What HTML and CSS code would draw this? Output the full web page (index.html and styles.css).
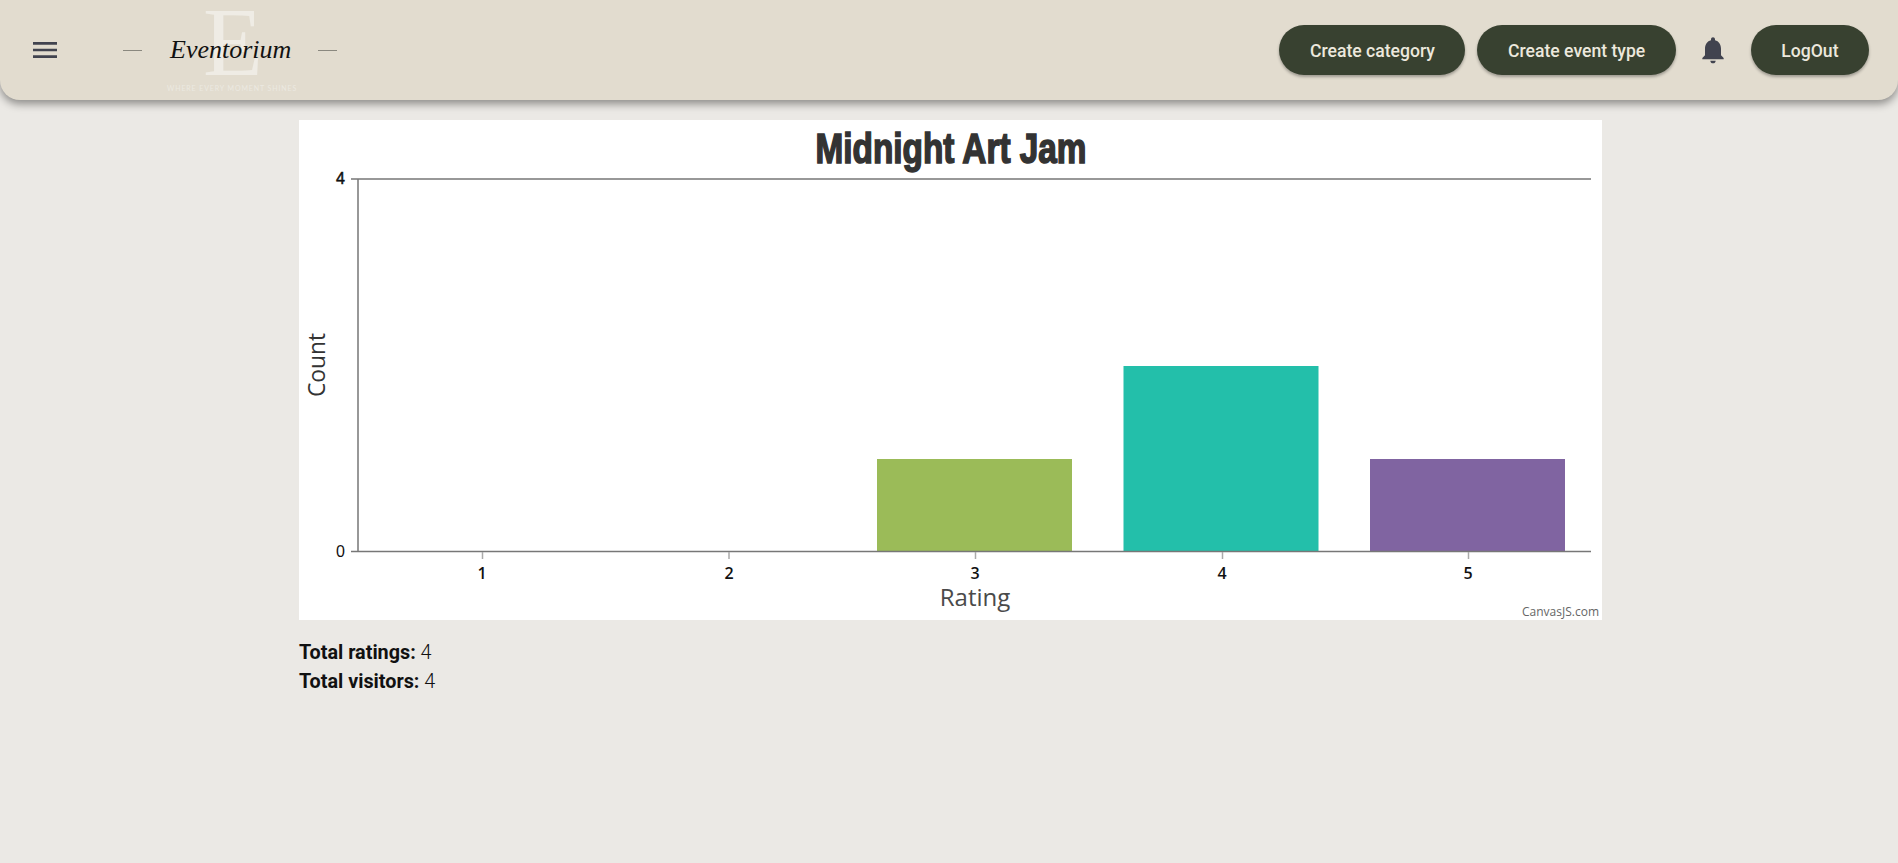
FILE: index.html
```html
<!DOCTYPE html>
<html lang="en">
<head>
  <meta charset="UTF-8" />
  <title>Eventorium</title>
  <link rel="stylesheet" href="styles.css">
</head>
<body>
  <header id="topbar">
    <button class="icon-btn menu-btn" aria-label="Menu">
      <svg viewBox="0 0 24 24" width="32" height="32"><path d="M3 18h18v-2H3v2zm0-5h18v-2H3v2zm0-7v2h18V6H3z"/></svg>
    </button>
    <div class="logo">
      <span class="logo-letter">E</span>
      <span class="logo-dash"></span>
      <span class="logo-name">Eventorium</span>
      <span class="logo-dash"></span>
      <span class="logo-tag">WHERE EVERY MOMENT SHINES</span>
    </div>
    <nav class="actions">
      <button class="pill">Create category</button>
      <button class="pill">Create event type</button>
      <button class="icon-btn bell-btn" aria-label="Notifications">
        <svg viewBox="0 0 24 24" width="32" height="32"><path d="M12 22c1.1 0 2-.9 2-2h-4c0 1.1.89 2 2 2zm6-6v-5c0-3.07-1.64-5.64-4.5-6.32V4c0-.83-.67-1.5-1.5-1.5s-1.5.67-1.5 1.5v.68C7.63 5.36 6 7.92 6 11v5l-2 2v1h16v-1l-2-2z"/></svg>
      </button>
      <button class="pill">LogOut</button>
    </nav>
  </header>

  <main id="content">
    <svg class="chart" viewBox="0 0 1303 500" width="1303" height="500">
      <text class="chart-title" x="652" y="43" textLength="271" lengthAdjust="spacingAndGlyphs" text-anchor="middle">Midnight Art Jam</text>

      <!-- bars -->
      <rect x="578" y="339" width="195" height="92" fill="#9bbb58"/>
      <rect x="824.5" y="246" width="195" height="185" fill="#23bfaa"/>
      <rect x="1071" y="339" width="195" height="92" fill="#8064a1"/>

      <!-- axes -->
      <path class="axis" d="M52 59H1292M52 431.5H1292M59 59V431.5"/>
      <path class="tick" d="M183.5 432V439M430 432V439M676.5 432V439M923.5 432V439M1169.5 432V439"/>

      <text class="y-tick y-tick-top" x="46" y="64" text-anchor="end">4</text>
      <text class="y-tick" x="46" y="437" text-anchor="end">0</text>

      <text class="x-tick" x="183" y="459" text-anchor="middle">1</text>
      <text class="x-tick" x="430" y="459" text-anchor="middle">2</text>
      <text class="x-tick" x="676" y="459" text-anchor="middle">3</text>
      <text class="x-tick" x="923" y="459" text-anchor="middle">4</text>
      <text class="x-tick" x="1169" y="459" text-anchor="middle">5</text>

      <text class="axis-title" x="676" y="486" text-anchor="middle">Rating</text>
      <text class="axis-title count-title" transform="translate(26 245) rotate(-90)" text-anchor="middle">Count</text>

      <text class="credit" x="1300" y="496" text-anchor="end">CanvasJS.com</text>
    </svg>

    <div class="stats">
      <div><strong>Total ratings:</strong> 4</div>
      <div><strong>Total visitors:</strong> 4</div>
    </div>
  </main>
</body>
</html>
```

FILE: styles.css
```css
html, body {
  margin: 0;
  padding: 0;
  height: 100%;
  font-family: Roboto, sans-serif;
  background: #ebe9e5;
  color: #111;
  overflow: hidden;
}

#topbar {
  display: flex;
  align-items: center;
  height: 100px;
  padding: 0 29px 0 29px;
  box-sizing: border-box;
  background: #e2dccf;
  border-radius: 0 0 20px 20px;
  box-shadow: 0 4px 8px rgba(0, 0, 0, 0.4);
}

.icon-btn {
  display: flex;
  align-items: center;
  justify-content: center;
  padding: 0;
  border: none;
  background: transparent;
  cursor: pointer;
}

.icon-btn svg {
  fill: #41434f;
}

.logo {
  position: relative;
  display: flex;
  align-items: center;
  gap: 28px;
  margin-left: 62px;
}

.logo-dash {
  width: 19px;
  height: 1px;
  background: #8a887f;
}

.logo-name {
  position: relative;
  width: 120px;
  font-family: "Liberation Serif", serif;
  font-style: italic;
  font-size: 26px;
  line-height: 36px;
  white-space: nowrap;
  color: #111;
}

.logo-letter {
  position: absolute;
  left: 80px;
  top: -29px;
  font-family: "Liberation Serif", serif;
  font-size: 98px;
  line-height: 78px;
  color: #efece5;
}

.logo-tag {
  position: absolute;
  left: 44px;
  top: 52px;
  font-family: Lato, sans-serif;
  font-size: 7px;
  letter-spacing: 0.9px;
  white-space: nowrap;
  color: #ece9e1;
}

.actions {
  display: flex;
  align-items: center;
  gap: 12px;
  margin-left: auto;
}

.pill {
  height: 50px;
  padding: 1px 30.5px 0;
  border: none;
  border-radius: 25px;
  background: #384130;
  color: #ece8dd;
  font-family: Roboto, sans-serif;
  font-size: 17.6px;
  font-weight: 500;
  cursor: pointer;
  box-shadow: 0 2px 3px rgba(0, 0, 0, 0.3);
}

.bell-btn {
  margin: 0 9.5px;
}

#content {
  padding: 20px 0 0 299px;
}

.chart {
  display: block;
  background: #fff;
}

.chart-title {
  font-family: "Liberation Sans", sans-serif;
  font-weight: 700;
  font-size: 42px;
  fill: #333;
  stroke: #333;
  stroke-width: 1.6;
}

.axis {
  fill: none;
  stroke: #777;
  stroke-width: 1.5;
}

.tick {
  fill: none;
  stroke: #aaa;
  stroke-width: 1.5;
}

.y-tick {
  font-family: "Liberation Sans", sans-serif;
  font-size: 16px;
  fill: #111;
}

.y-tick-top {
  stroke: #111;
  stroke-width: 0.5;
}

.x-tick {
  font-family: "Open Sans", sans-serif;
  font-size: 16px;
  font-weight: 600;
  fill: #111;
}

.axis-title {
  font-family: "Open Sans", sans-serif;
  font-size: 24px;
  fill: #4a4a4a;
}

.count-title {
  font-size: 22.8px;
  fill: #333;
}

.credit {
  font-family: "Open Sans", sans-serif;
  font-size: 12px;
  fill: #666;
}

.stats {
  margin-top: 18px;
  font-size: 19.8px;
  line-height: 29px;
  font-weight: 300;
}

.stats strong {
  font-weight: 700;
}
```
